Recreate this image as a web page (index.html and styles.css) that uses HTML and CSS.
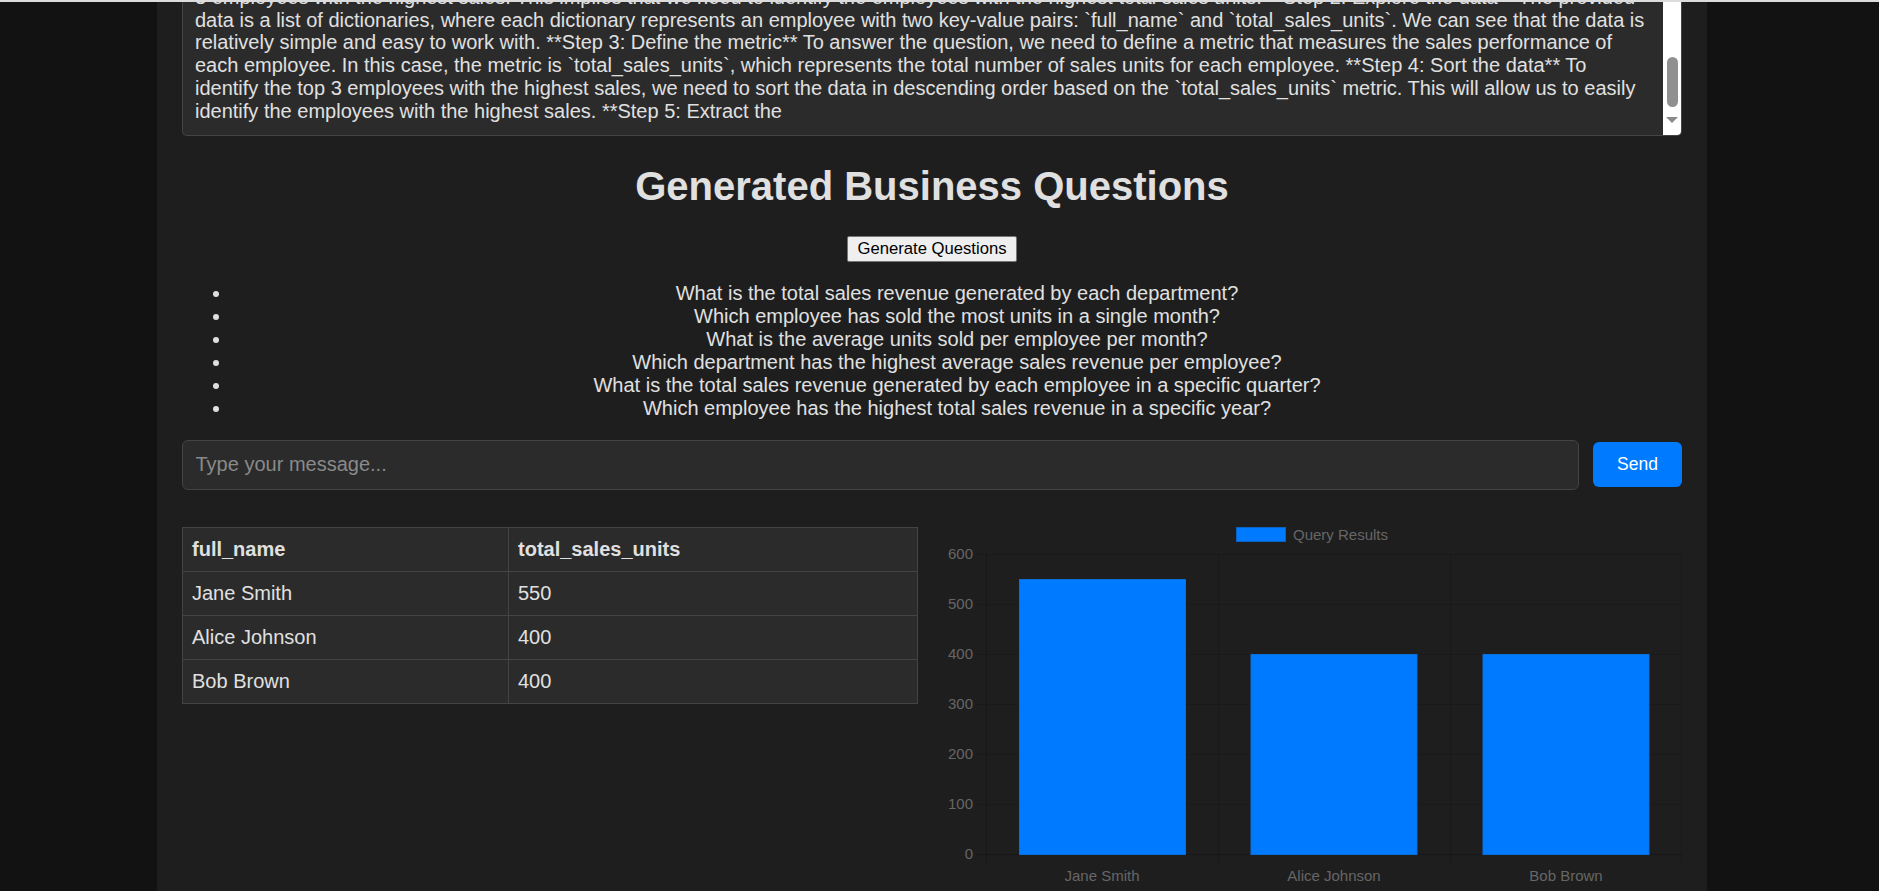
FILE: index.html
```html
<!DOCTYPE html>
<html lang="en">
<head>
<meta charset="utf-8">
<title>Business Questions</title>
<link rel="stylesheet" href="styles.css">
</head>
<body>
<div class="topline"></div>
<div class="page">
  <div class="reasoning">
    <div class="reasoning-text">
      <div class="rl">3 employees with the highest sales. This implies that we need to identify the employees with the highest total sales units. **Step 2: Explore the data** The provided</div>
      <div class="rl">data is a list of dictionaries, where each dictionary represents an employee with two key-value pairs: `full_name` and `total_sales_units`. We can see that the data is</div>
      <div class="rl">relatively simple and easy to work with. **Step 3: Define the metric** To answer the question, we need to define a metric that measures the sales performance of</div>
      <div class="rl">each employee. In this case, the metric is `total_sales_units`, which represents the total number of sales units for each employee. **Step 4: Sort the data** To</div>
      <div class="rl">identify the top 3 employees with the highest sales, we need to sort the data in descending order based on the `total_sales_units` metric. This will allow us to easily</div>
      <div class="rl">identify the employees with the highest sales. **Step 5: Extract the</div>
    </div>
    <div class="scrollbar">
      <div class="sb-space"></div>
      <div class="sb-thumb"></div>
      <div class="sb-arrow"></div>
    </div>
  </div>

  <h1 class="title">Generated Business Questions</h1>
  <button class="gen-btn" type="button">Generate Questions</button>
  <ul class="questions">
    <li>What is the total sales revenue generated by each department?</li>
    <li>Which employee has sold the most units in a single month?</li>
    <li>What is the average units sold per employee per month?</li>
    <li>Which department has the highest average sales revenue per employee?</li>
    <li>What is the total sales revenue generated by each employee in a specific quarter?</li>
    <li>Which employee has the highest total sales revenue in a specific year?</li>
  </ul>

  <div class="chat-row">
    <input class="chat-input" type="text" placeholder="Type your message...">
    <button class="send-btn" type="button">Send</button>
  </div>

  <div class="results">
    <table class="data-table">
      <thead>
        <tr><th class="c1">full_name</th><th>total_sales_units</th></tr>
      </thead>
      <tbody>
        <tr><td class="c1">Jane Smith</td><td>550</td></tr>
        <tr><td class="c1">Alice Johnson</td><td>400</td></tr>
        <tr><td class="c1">Bob Brown</td><td>400</td></tr>
      </tbody>
    </table>
    <div class="chart">
      <svg class="chart-svg" width="748" height="364" viewBox="0 0 748 364">
        <rect class="legend-box" x="302.5" y="0.5" width="49" height="14"/>
        <text class="legend-text" x="359" y="13">Query Results</text>
        <g class="grid">
          <line x1="42" y1="27.5" x2="748" y2="27.5"/>
          <line x1="42" y1="77.5" x2="748" y2="77.5"/>
          <line x1="42" y1="127.5" x2="748" y2="127.5"/>
          <line x1="42" y1="177.5" x2="748" y2="177.5"/>
          <line x1="42" y1="227.5" x2="748" y2="227.5"/>
          <line x1="42" y1="277.5" x2="748" y2="277.5"/>
          <line x1="284.5" y1="27" x2="284.5" y2="337"/>
          <line x1="516.5" y1="27" x2="516.5" y2="337"/>
          <line x1="747.5" y1="27" x2="747.5" y2="337"/>
        </g>
        <g class="axis">
          <line x1="52.5" y1="27" x2="52.5" y2="337"/>
          <line x1="42" y1="327.5" x2="748" y2="327.5"/>
        </g>
        <g class="ylabels">
          <text x="39" y="32">600</text>
          <text x="39" y="82">500</text>
          <text x="39" y="132">400</text>
          <text x="39" y="182">300</text>
          <text x="39" y="232">200</text>
          <text x="39" y="282">100</text>
          <text x="39" y="332">0</text>
        </g>
        <g class="bars">
          <rect x="85.5" y="52.5" width="166" height="275"/>
          <rect x="317" y="127.5" width="166" height="200"/>
          <rect x="549" y="127.5" width="166" height="200"/>
        </g>
        <g class="xlabels">
          <text x="168" y="354">Jane Smith</text>
          <text x="400" y="354">Alice Johnson</text>
          <text x="632" y="354">Bob Brown</text>
        </g>
      </svg>
    </div>
  </div>
</div>
</body>
</html>
```

FILE: styles.css
```css
html, body {
  margin: 0;
  padding: 0;
}

body {
  background: #121212;
  color: #e0e0e0;
  font-family: "Liberation Sans", Arial, sans-serif;
  overflow: hidden;
  padding-right: 15px;
}

.topline {
  height: 2px;
  background: #dcdcdc;
  margin-right: -15px;
}

.page {
  width: 1500px;
  margin: 0 auto;
  padding: 0 25px;
  background: #1e1e1e;
  min-height: 889px;
}

/* scrolled reasoning textarea */
.reasoning {
  display: flex;
  height: 133px;
  background: #2b2b2b;
  border: 1px solid #444;
  border-top: none;
  border-radius: 0 0 5px 5px;
  overflow: hidden;
}

.reasoning-text {
  flex: 1;
  display: flex;
  flex-direction: column;
  justify-content: flex-end;
  overflow: hidden;
  padding: 0 12px 12.5px 12px;
  font-size: 20px;
  line-height: 22.8px;
  color: #e0e0e0;
}

.rl {
  white-space: nowrap;
}

.scrollbar {
  width: 18px;
  background: #ffffff;
  display: flex;
  flex-direction: column;
  align-items: center;
}

.sb-space {
  flex: 1;
}

.sb-thumb {
  width: 11px;
  height: 50px;
  border-radius: 6px;
  background: #909090;
}

.sb-arrow {
  width: 0;
  height: 0;
  margin-top: 10px;
  margin-bottom: 12px;
  border-left: 6.5px solid transparent;
  border-right: 6.5px solid transparent;
  border-top: 6px solid #8a8a8a;
}

.title {
  margin: 26.8px 0;
  font-size: 40px;
  line-height: 46px;
  font-weight: bold;
  text-align: center;
  color: #e0e0e0;
}

.gen-btn {
  display: block;
  margin: 0 auto;
  height: 26px;
  padding: 2px 9px;
  font-family: "Liberation Sans", Arial, sans-serif;
  font-size: 16.67px;
  line-height: 20px;
  color: #000;
  background: #efefef;
  border: 1px solid #767676;
  border-radius: 2px;
}

.questions {
  margin: 20px 0;
  padding-left: 50px;
  font-size: 20px;
  line-height: 23px;
}

.questions li {
  text-align: center;
}

.chat-row {
  display: flex;
  align-items: center;
  gap: 14px;
}

.chat-input {
  flex: 1;
  height: 50px;
  box-sizing: border-box;
  padding: 12.5px 12.5px;
  font-family: "Liberation Sans", Arial, sans-serif;
  font-size: 20px;
  line-height: 23px;
  color: #e0e0e0;
  background: #2b2b2b;
  border: 1px solid #444;
  border-radius: 6px;
  outline: none;
}

.chat-input::placeholder {
  color: #8a8a8a;
}

.send-btn {
  height: 45px;
  width: 89px;
  padding: 0;
  font-family: "Liberation Sans", Arial, sans-serif;
  font-size: 17.5px;
  color: #fff;
  background: #007bff;
  border: none;
  border-radius: 6px;
}

.results {
  display: grid;
  grid-template-columns: 736px 1fr;
  gap: 16px;
  margin-top: 37px;
  align-items: start;
}

.data-table {
  width: 736px;
  border-collapse: collapse;
  background: #2b2b2b;
  font-size: 20px;
  line-height: 23px;
  color: #e0e0e0;
}

.data-table th,
.data-table td {
  border: 1px solid #444;
  padding: 10px 9px;
  text-align: left;
}

.data-table th {
  font-weight: bold;
}

.data-table .c1 {
  width: 307px;
}

.chart {
  height: 364px;
}

.chart-svg {
  display: block;
  font-family: "Liberation Sans", Arial, sans-serif;
}

.legend-box {
  fill: #007bff;
  stroke: #0a63c4;
  stroke-width: 1;
}

.legend-text {
  font-size: 15px;
  fill: #666;
}

.grid line {
  stroke: rgba(0, 0, 0, 0.12);
  stroke-width: 1;
}

.axis line {
  stroke: rgba(0, 0, 0, 0.22);
  stroke-width: 1;
}

.ylabels text {
  font-size: 15px;
  fill: #666;
  text-anchor: end;
}

.xlabels text {
  font-size: 15px;
  fill: #666;
  text-anchor: middle;
}

.bars rect {
  fill: #007bff;
  stroke: #0a6fd8;
  stroke-width: 1;
}
```
